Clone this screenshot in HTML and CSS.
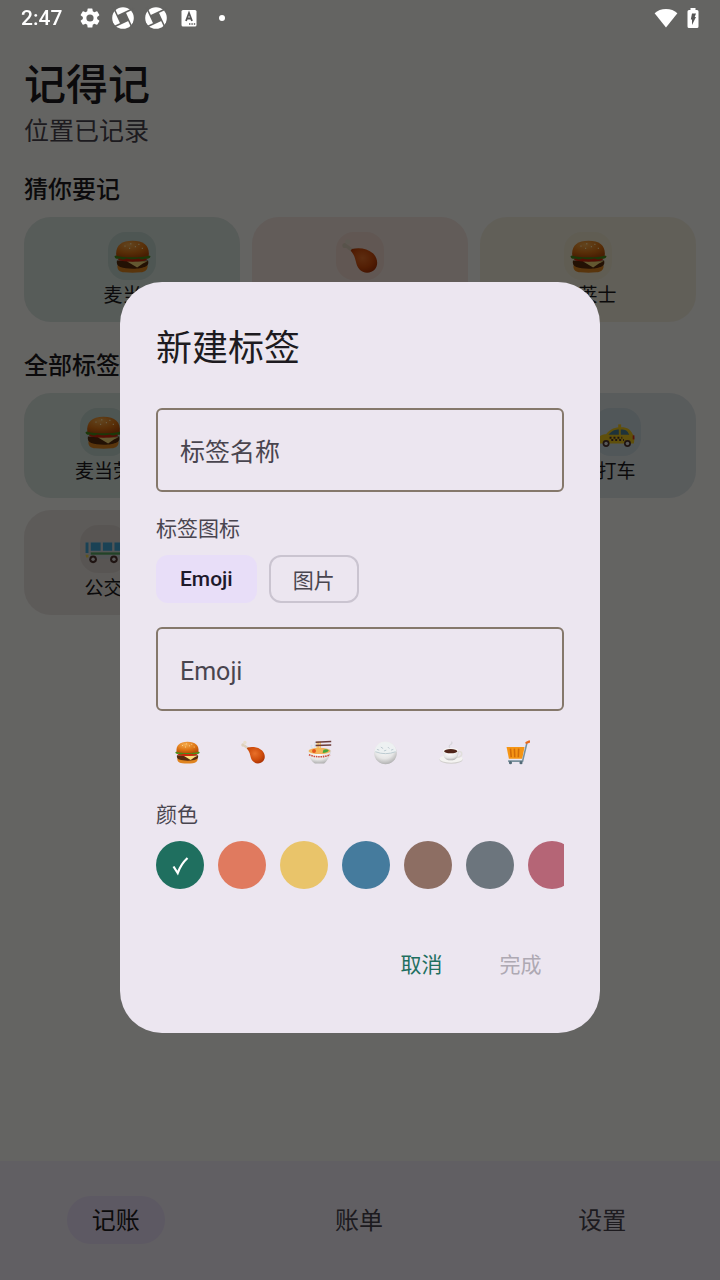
FILE: index.html
```html
<!DOCTYPE html>
<html lang="zh-CN">
<head>
<meta charset="utf-8">
<meta name="viewport" content="width=device-width, initial-scale=1">
<title>记得记</title>
<link rel="stylesheet" href="styles.css">
</head>
<body>
<svg class="defs" aria-hidden="true">
  <defs>
    <radialGradient id="bun" cx=".4" cy=".25" r=".8"><stop offset="0" stop-color="#f5ab4c"/><stop offset=".6" stop-color="#dd7413"/><stop offset="1" stop-color="#b64d08"/></radialGradient>
    <radialGradient id="meat" cx=".45" cy=".4" r=".65"><stop offset="0" stop-color="#e8702a"/><stop offset=".6" stop-color="#cf4d0c"/><stop offset="1" stop-color="#a93204"/></radialGradient>
    <radialGradient id="china" cx=".45" cy=".3" r=".75"><stop offset="0" stop-color="#fff"/><stop offset=".6" stop-color="#e6e6e6"/><stop offset="1" stop-color="#a8a8a8"/></radialGradient>
  </defs>
  <symbol id="shutter" viewBox="0 0 24 24">
    <circle cx="12" cy="12" r="10.800" fill="#fff"/>
    <path d="M14 6.500 17.500 14 10 17.500 6.500 10z" fill="#636361"/>
    <path d="M6.500 10 23 2.300M14 6.500 21.700 23M17.500 14 1 21.700M10 17.500 2.300 1" stroke="#636361" stroke-width="1.600"/>
  </symbol>
  <symbol id="burger" viewBox="0 0 32 32">
    <path d="M3 23.500h26c.5 4-2.500 6-6 6.200-5 .4-9 .4-14 0-4-.2-6.500-2.200-6-6.200z" fill="#df8420"/>
    <path d="M2.500 19.500h27c.7 3-.5 5-3 5.500-3 .8-5 1.500-10 1.500s-8-.7-11-1.500c-2.500-.7-3.500-2.500-3-5.500z" fill="#572b0c"/>
    <path d="M11 20h18l-4 2-5 3.500z" fill="#f8dc7a"/>
    <path d="M3 18c4-2 22-2 26 0-1 2-6 2.500-13 2.500S4 20 3 18z" fill="#d3230c"/>
    <path d="M.5 15.500c9-3 22-3 31 0 .3 2-2 3-4.500 2.200-2 1.500-4 .8-5.500 0-3 .8-8 .8-11 0-2 1.500-4 1-5.500 0C2.500 18.500.3 17.500.5 15.500z" fill="#478d18"/>
    <path d="M2 15.300C1 7 6 2.300 16 2.300S31 7 30 15.300c-7 1.800-21 1.800-28 0z" fill="url(#bun)"/>
    <path d="M9 7h1M14 5h1M18 7.500h1M21 5.500h1M24 9h1M13 9h1" stroke="#ffe5aa" stroke-width="1.200"/>
  </symbol>
  <symbol id="drumstick" viewBox="0 0 32 32">
    <path d="M4 7 12 13" stroke="#ddd0bb" stroke-width="3"/>
    <circle cx="2.500" cy="6.500" r="2.200" fill="#ddd0bb"/><circle cx="5" cy="3.300" r="2.200" fill="#e9dfcd"/>
    <path d="M8.500 9.500C15 8 22 9 27 13.500c4 4 4.500 10 1.500 13.500-3.500 4-10 4-13.500 0C11 22.500 13 17 7.500 11z" fill="url(#meat)"/>
  </symbol>
  <symbol id="noodles" viewBox="0 0 32 32">
    <path d="M10 3v10M7 7c-3-1-2 2 0 3" fill="none" stroke="#d5e1eb" stroke-width="1.500"/>
    <path d="M1 14c1-5 29-5 30 0-2 9-7 14-9 16H10C7 28 2 23 1 14z" fill="url(#china)"/>
    <ellipse cx="16" cy="14" rx="14" ry="4" fill="#f3b35c"/>
    <path d="M21 12.500q4-2 7 1-2 3-8 3z" fill="#45a83c"/><circle cx="9" cy="14" r="2.500" fill="#e4561c"/>
    <path d="M13 2v13M15 2v13M17 2v12" stroke="#f5b94d" stroke-width="1.300"/>
    <path d="M11 3 31 2M11 7l20-.5" stroke="#6c3c38" stroke-width="2"/>
    <path d="M2.500 19q13.500 5 27 0" fill="none" stroke="#cf4a3c" stroke-width="2" stroke-dasharray="2 1"/>
  </symbol>
  <symbol id="rice" viewBox="0 0 32 32">
    <circle cx="16" cy="16.500" r="14.500" fill="url(#china)"/>
    <path d="M2 15C3 7 9 2.500 16 2.500S29 7 30 15c-7 3-21 3-28 0z" fill="#edf1f2"/>
    <path d="M3 15q13 5 26 0M5 12l3 1m2-4 3 2m1 3 3-1m2-4 2 2m2 2 3-1" fill="none" stroke="#b9c8ce" stroke-width="1.200"/>
  </symbol>
  <symbol id="coffee" viewBox="0 0 32 32">
    <ellipse cx="15.500" cy="25" rx="15" ry="5.500" fill="#d1cfcd"/>
    <ellipse cx="15.500" cy="24" rx="15" ry="5" fill="#f4f3f1"/>
    <path d="M24 15c7-2 7 7-1 7" fill="none" stroke="#e1dfdc" stroke-width="2"/>
    <path d="M5 14h20c0 7-2 12-10 12S5 21 5 14z" fill="url(#china)"/>
    <ellipse cx="15" cy="14" rx="10" ry="3.800" fill="#f8f7f6"/><ellipse cx="15" cy="14.300" rx="8.500" ry="2.800" fill="#50261b"/>
    <path d="M14 10c-4-4 5-4 2-8" fill="none" stroke="#d6d5da" stroke-width="1.500"/>
  </symbol>
  <symbol id="cart" viewBox="0 0 32 32">
    <path d="M2 9h23l-3 15H5z" fill="#f59514"/>
    <path d="M7 11l1 11M12 11l.5 11M17.500 11 17 22" stroke="#d26c08" stroke-width="2"/>
    <path d="M28 4 22.500 27H4" fill="none" stroke="#78909c" stroke-width="2"/>
    <path d="m27.500 3.500 3.500-1.500" stroke="#e96a1c" stroke-width="3" stroke-linecap="round"/>
    <circle cx="7" cy="29" r="2" fill="#536b78"/><circle cx="20.500" cy="29" r="2" fill="#536b78"/>
  </symbol>
  <symbol id="bus" viewBox="0 0 32 32">
    <path d="M.5 9h31v15H2L.5 22z" fill="#cfd4d6"/>
    <path d="M.5 10H3v9H.5zM5 10h8.500v7H5zM15.500 10h8v7h-8zM25.500 10h6v7h-6z" fill="#42a5d5"/>
    <path d="M5 19.500h26.500" stroke="#55a961" stroke-width="2"/>
    <path d="M.5 20.500H3V23H1z" fill="#f3d34b"/>
    <circle cx="7" cy="24.500" r="3.300" fill="#4e342e"/><circle cx="7" cy="24.500" r="1.500" fill="#ddd"/><circle cx="25" cy="24.500" r="3.300" fill="#4e342e"/><circle cx="25" cy="24.500" r="1.500" fill="#ddd"/>
  </symbol>
  <symbol id="taxi" viewBox="0 0 32 32">
    <rect x="17.500" y="9" width="2.500" height="3" fill="#f5c518"/>
    <path d="M.5 21c.5-2.500 4-3.500 6.500-3.500 4-5 8-6 13-6 6 0 8 2 10 6 1.500 1 1.700 5 1 8H2C.5 25 0 23 .5 21z" fill="#edc61c"/>
    <path d="M9 18c3-4 6-4.700 9-4.700V18zM19.700 13.300c4 0 6 1 7.300 4.700h-7.300z" fill="#4d7f91"/>
    <path d="M10 20.500h11M11.500 22.500h11" stroke="#4e342e" stroke-width="1.700" stroke-dasharray="1.700 1.700"/>
    <path d="M30 18.500h1.500V22H30z" fill="#d9301c"/>
    <circle cx="7" cy="25.500" r="3" fill="#4e342e"/><circle cx="7" cy="25.500" r="1.500" fill="#ddd"/><circle cx="25.500" cy="25.500" r="3" fill="#4e342e"/><circle cx="25.500" cy="25.500" r="1.500" fill="#ddd"/>
  </symbol>
</svg>

<div class="status">
  <span class="time">2:47</span>
  <svg class="status-icon" viewBox="0 0 24 24"><path fill="#fff" d="M19.140 12.940c.04-.3.06-.61.06-.94 0-.32-.02-.64-.07-.94l2.030-1.580a.49.49 0 0 0 .12-.61l-1.920-3.320a.49.49 0 0 0-.59-.22l-2.390.96a7 7 0 0 0-1.620-.94l-.36-2.540A.48.48 0 0 0 13.920 2.400h-3.840a.47.47 0 0 0-.47.41l-.36 2.540c-.59.24-1.130.57-1.620.94l-2.390-.96a.48.48 0 0 0-.59.22L2.740 8.870a.47.47 0 0 0 .12.61l2.030 1.580c-.05.3-.09.63-.09.94s.02.64.07.94l-2.030 1.580a.49.49 0 0 0-.12.61l1.920 3.320c.12.22.37.29.59.22l2.390-.96c.5.38 1.030.7 1.620.94l.36 2.540c.05.24.24.41.48.41h3.840c.24 0 .44-.17.47-.41l.36-2.540c.59-.24 1.130-.56 1.620-.94l2.390.96c.22.08.47 0 .59-.22l1.920-3.320a.47.47 0 0 0-.12-.61zM12 15.600a3.600 3.600 0 1 1 0-7.200 3.600 3.600 0 0 1 0 7.200z"/></svg>
  <svg class="status-icon" viewBox="0 0 24 24"><use href="#shutter"/></svg>
  <svg class="status-icon" viewBox="0 0 24 24"><use href="#shutter"/></svg>
  <svg class="status-icon" viewBox="0 0 24 24"><rect x="4.500" y="4" width="15" height="16.500" rx="1.500" fill="#fff"/><path d="M9 15l3-8 3 8M10 12.500h4" fill="none" stroke="#555" stroke-width="1.800"/><path d="M12 18h1.400m1 0h1.400m1 0h1.400" stroke="#555" stroke-width="1.400"/></svg>
  <span class="dot"></span>
  <span class="spring"></span>
  <svg class="wifi" viewBox="0 0 24 20"><path fill="#fff" d="M12 19.500.6 5.300C3.500 2.500 7.500 1 12 1s8.500 1.500 11.400 4.300z"/></svg>
  <svg class="battery" viewBox="0 0 12 22"><path fill="#fff" d="M3.500 1h5v2H10a1.500 1.500 0 0 1 1.500 1.500v15A1.500 1.500 0 0 1 10 21H2a1.500 1.500 0 0 1-1.500-1.500v-15A1.500 1.500 0 0 1 2 3h1.500z"/><path fill="#555" d="M5 6.500h4L7.700 10H9l-4 8v-5.500H3.800z"/></svg>
</div>

<div class="app">
  <main class="home">
    <header>
      <h1>记得记</h1>
      <p class="subtitle">位置已记录</p>
    </header>
    <section>
      <h2>猜你要记</h2>
      <div class="cards three">
        <button class="card green"><span class="icon"><svg><use href="#burger"/></svg></span>麦当劳</button>
        <button class="card orange" aria-label="炸鸡"><span class="icon"><svg><use href="#drumstick"/></svg></span></button>
        <button class="card yellow"><span class="icon"><svg><use href="#burger"/></svg></span>华莱士</button>
      </div>
    </section>
    <section>
      <h2>全部标签</h2>
      <div class="cards four">
        <button class="card green"><span class="icon"><svg><use href="#burger"/></svg></span>麦当劳</button>
        <button class="card blue last"><span class="icon"><svg><use href="#taxi"/></svg></span>打车</button>
        <button class="card brown"><span class="icon"><svg><use href="#bus"/></svg></span>公交</button>
      </div>
    </section>
  </main>
  <nav class="tabs">
    <a class="tab" href="#record" aria-current="page"><span>记账</span></a>
    <a class="tab" href="#bills"><span>账单</span></a>
    <a class="tab" href="#settings"><span>设置</span></a>
  </nav>
</div>

<div class="scrim">
  <form class="dialog" role="dialog" aria-modal="true" aria-labelledby="dialog-title">
    <h2 class="dialog-title" id="dialog-title">新建标签</h2>
    <input class="field" type="text" placeholder="标签名称" aria-label="标签名称">
    <p class="label">标签图标</p>
    <div class="chips">
      <button type="button" class="chip selected" aria-pressed="true">Emoji</button>
      <button type="button" class="chip" aria-pressed="false">图片</button>
    </div>
    <input class="field" type="text" placeholder="Emoji" aria-label="Emoji">
    <div class="emojis">
      <button type="button" class="emoji" aria-label="汉堡"><svg><use href="#burger"/></svg></button>
      <button type="button" class="emoji" aria-label="鸡腿"><svg><use href="#drumstick"/></svg></button>
      <button type="button" class="emoji" aria-label="面条"><svg><use href="#noodles"/></svg></button>
      <button type="button" class="emoji" aria-label="米饭"><svg><use href="#rice"/></svg></button>
      <button type="button" class="emoji" aria-label="咖啡"><svg><use href="#coffee"/></svg></button>
      <button type="button" class="emoji" aria-label="购物车"><svg><use href="#cart"/></svg></button>
    </div>
    <p class="label">颜色</p>
    <div class="swatches">
      <label class="swatch green"><input type="radio" name="color" aria-label="绿色" checked><svg viewBox="0 0 48 48"><path d="M17.500 25.500 21.700 32Q25 23 31.500 17" fill="none" stroke="#fff" stroke-width="2.200"/></svg></label>
      <label class="swatch orange"><input type="radio" name="color" aria-label="橙色"></label>
      <label class="swatch yellow"><input type="radio" name="color" aria-label="黄色"></label>
      <label class="swatch blue"><input type="radio" name="color" aria-label="蓝色"></label>
      <label class="swatch brown"><input type="radio" name="color" aria-label="棕色"></label>
      <label class="swatch gray"><input type="radio" name="color" aria-label="灰色"></label>
      <label class="swatch pink"><input type="radio" name="color" aria-label="粉色"></label>
    </div>
    <div class="actions">
      <button type="button" class="action">取消</button>
      <button type="submit" class="action" disabled>完成</button>
    </div>
  </form>
</div>
</body>
</html>
```
FILE: styles.css
```css
* { box-sizing: border-box; }
body, h1, h2, p { margin: 0; }
body, button, input {
  font-family: Roboto, "Noto Sans CJK SC", sans-serif;
  color: #1d1b20;
}
button { border: 0; padding: 0; background: none; }

.green { --tint: #1f6f5f; }
.orange { --tint: #e07a5f; }
.yellow { --tint: #e9c46a; }
.blue { --tint: #457b9d; }
.brown { --tint: #8d6e63; }
.gray { --tint: #6c757d; }
.pink { --tint: #b56576; }

.status {
  position: fixed;
  inset: 0 0 auto;
  z-index: 2;
  display: flex;
  align-items: center;
  gap: 9px;
  height: 36px;
  padding: 0 21px;
  color: #fff;
}
.time { font-size: 21px; font-weight: 500; margin-right: 7px; }
.status-icon { width: 24px; height: 24px; }
.dot { width: 6px; height: 6px; margin-left: 9px; border-radius: 50%; background: #fff; }
.spring { flex: 1; }
.wifi { width: 24px; height: 20px; }
.battery { width: 12px; height: 22px; }
.defs { position: absolute; width: 0; height: 0; }

.app {
  display: flex;
  flex-direction: column;
  min-height: 100vh;
  background: #faf9f5;
}
.home {
  flex: 1;
  display: flex;
  flex-direction: column;
  gap: 27px;
  padding: 54px 24px 24px;
}
h1 { font-size: 42px; line-height: 64px; font-weight: 500; }
.subtitle { font-size: 25px; line-height: 28px; color: #49454f; }
.home h2 { font-size: 24px; line-height: 34px; margin-bottom: 10px; font-weight: 500; }
.cards { display: grid; gap: 12px; }
.three { grid-template-columns: repeat(3, 1fr); }
.four { grid-template-columns: repeat(4, 1fr); }
.card {
  display: flex;
  flex-direction: column;
  align-items: center;
  gap: 2px;
  padding: 15px 15px 13px;
  border-radius: 27px;
  font-size: 19px;
  line-height: 27px;
  background: color-mix(in srgb, var(--tint) 15%, transparent);
}
.card.yellow { background: #f2eedd; }
.last { grid-column: 4; }
.icon {
  display: grid;
  place-items: center;
  width: 48px;
  height: 48px;
  border-radius: 18px;
  background: color-mix(in srgb, var(--tint) 12%, transparent);
}
.icon svg { width: 37px; height: 37px; }

.tabs {
  display: flex;
  gap: 12px;
  height: 119px;
  padding: 0 2px 2px 0;
  background: #f3edf7;
}
.tab {
  flex: 1;
  display: grid;
  place-items: center;
  font-size: 24px;
  color: #49454f;
  text-decoration: none;
}
.tab span { padding: 2px 25px 0; line-height: 46px; border-radius: 24px; }
.tab[aria-current] { color: #1d1b20; }
.tab[aria-current] span { background: #e8def8; }

.scrim {
  position: fixed;
  inset: 0;
  display: grid;
  place-items: center;
  padding-top: 35px;
  background: rgb(0 0 0 / 60%);
}
.dialog {
  width: 66.67%;
  min-width: 320px;
  padding: 40px 36px;
  border-radius: 42px;
  background: #ece6f0;
}
.dialog-title { font-size: 36px; line-height: 54px; margin-bottom: 32px; font-weight: 400; }
.field {
  display: block;
  width: 100%;
  height: 84px;
  padding: 4px 22px 0;
  border: 2px solid #85786b;
  border-radius: 6px;
  background: none;
  font-size: 25px;
}
.field::placeholder { color: #49454f; opacity: 1; }
.label { font-size: 21px; line-height: 27px; margin: 24px 0 12px; color: #49454f; }
.chips { display: flex; gap: 12px; margin-bottom: 24px; }
.chip {
  height: 48px;
  padding: 0 22px;
  border: 2px solid #cac4d0;
  border-radius: 12px;
  font-size: 21px;
  color: #49454f;
}
.selected {
  border-color: #e8def8;
  background: #e8def8;
  color: #1d192b;
  font-weight: 500;
}
.emojis { display: flex; gap: 2px; margin-top: 15px; }
.emoji { display: grid; place-items: center; width: 64px; height: 52px; }
.emoji svg { width: 25px; height: 25px; }
.swatches { display: flex; gap: 14px; overflow: hidden; }
.swatch { flex: none; width: 48px; height: 48px; border-radius: 50%; background: var(--tint); }
.swatch input { position: absolute; opacity: 0; }
.swatch svg { display: block; }
.actions { display: flex; justify-content: flex-end; gap: 12px; margin-top: 44px; }
.action { min-width: 87px; height: 60px; font-size: 21px; color: #1f6f5f; }
.action:disabled { color: #aea9b3; }
```
